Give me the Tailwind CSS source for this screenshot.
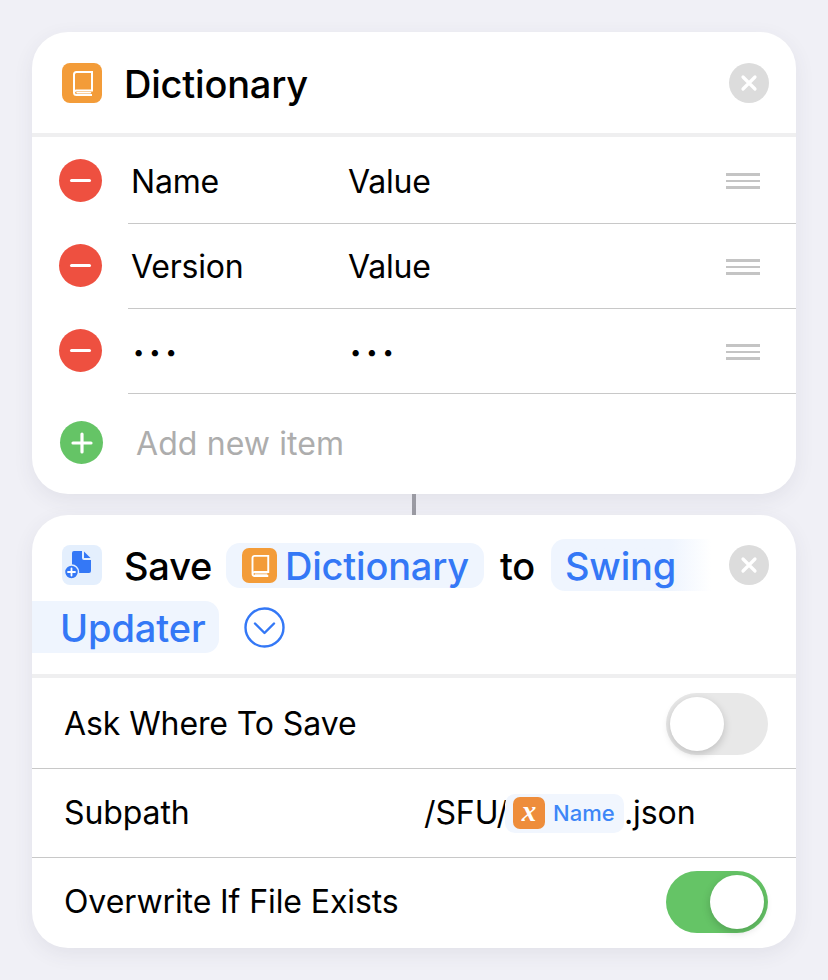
<!DOCTYPE html>
<html lang="en">
<head>
    <meta charset="UTF-8">
    <meta name="viewport" content="width=device-width, initial-scale=1.0">
    <title>Shortcut Actions</title>
    <script src="https://cdn.jsdelivr.net/npm/@tailwindcss/browser@4"></script>
</head>
<body class="bg-[#f0f0f6] w-[828px] h-[980px] overflow-hidden font-['Inter',sans-serif] text-black">

    <div class="pt-[32px] px-[32px] flex flex-col">

        <!-- Dictionary card -->
        <div class="h-[462px] bg-white rounded-[36px] shadow-[0_6px_20px_rgba(60,60,90,0.08)] overflow-hidden flex flex-col">
            <div class="h-[101px] shrink-0 flex items-center pl-[30px] pr-[27px]">
                <div class="w-[40px] h-[40px] rounded-[8px] bg-[#f39c39] shrink-0">
                    <svg width="40" height="40" viewBox="0 0 40 40" fill="none" stroke="#fff"><path d="M12 29.500V11.500A2.500 2.500 0 0 1 14.500 9H30V27.500H14.500A2.500 2.500 0 0 0 12 29.500A2.500 2.500 0 0 0 14.500 32H30" stroke-width="2"/><path d="M15 29.800H28.500" stroke-width="1.500" stroke-linecap="round"/></svg>
                </div>
                <span class="ml-[22px] mt-[2px] text-[38px] leading-none tracking-[-0.2px] font-medium">Dictionary</span>
                <div class="ml-auto w-[40px] h-[40px] rounded-full bg-[#dcdcdc] flex items-center justify-center shrink-0">
                    <svg width="18" height="18" viewBox="0 0 18 18" stroke="#fff" stroke-width="3.200" stroke-linecap="round"><path d="M3 3l12 12M15 3L3 15"/></svg>
                </div>
            </div>
            <div class="h-[4px] shrink-0 bg-[#efeff0]"></div>

            <div class="h-[87px] shrink-0 flex items-center pl-[27px]">
                <div class="w-[43px] h-[43px] rounded-full bg-[#ee5040] flex items-center justify-center shrink-0"><span class="w-[21px] h-[3.500px] bg-white rounded-full"></span></div>
                <div class="ml-[26px] flex-1 self-stretch border-b border-[#c8c8c8] flex items-center pl-[3px] pr-[36px] text-[32px] tracking-[-0.2px]">
                    <span class="w-[217px] mt-[3px]">Name</span><span class="mt-[3px]">Value</span>
                    <div class="ml-auto mt-[2px] flex flex-col gap-[4px]"><span class="block w-[34px] h-[2.500px] bg-[#c4c4c4]"></span><span class="block w-[34px] h-[2.500px] bg-[#c4c4c4]"></span><span class="block w-[34px] h-[2.500px] bg-[#c4c4c4]"></span></div>
                </div>
            </div>
            <div class="h-[85px] shrink-0 flex items-center pl-[27px]">
                <div class="w-[43px] h-[43px] -mt-[2px] rounded-full bg-[#ee5040] flex items-center justify-center shrink-0"><span class="w-[21px] h-[3.500px] bg-white rounded-full"></span></div>
                <div class="ml-[26px] flex-1 self-stretch border-b border-[#c8c8c8] flex items-center pl-[3px] pr-[36px] text-[32px] tracking-[-0.2px]">
                    <span class="w-[217px] mt-[1px]">Version</span><span class="mt-[1px]">Value</span>
                    <div class="ml-auto mt-[2px] flex flex-col gap-[4px]"><span class="block w-[34px] h-[2.500px] bg-[#c4c4c4]"></span><span class="block w-[34px] h-[2.500px] bg-[#c4c4c4]"></span><span class="block w-[34px] h-[2.500px] bg-[#c4c4c4]"></span></div>
                </div>
            </div>
            <div class="h-[85px] shrink-0 flex items-center pl-[27px]">
                <div class="w-[43px] h-[43px] -mt-[2px] rounded-full bg-[#ee5040] flex items-center justify-center shrink-0"><span class="w-[21px] h-[3.500px] bg-white rounded-full"></span></div>
                <div class="ml-[26px] flex-1 self-stretch border-b border-[#c8c8c8] flex items-center pl-[5px] pr-[36px] text-[32px]">
                    <span class="w-[217px] mt-[2px] text-[20px] tracking-[5px] leading-none">•••</span><span class="mt-[2px] text-[20px] tracking-[5px] leading-none">•••</span>
                    <div class="ml-auto mt-[2px] flex flex-col gap-[4px]"><span class="block w-[34px] h-[2.500px] bg-[#c4c4c4]"></span><span class="block w-[34px] h-[2.500px] bg-[#c4c4c4]"></span><span class="block w-[34px] h-[2.500px] bg-[#c4c4c4]"></span></div>
                </div>
            </div>
            <div class="flex-1 flex items-center pl-[28px] pb-[3px]">
                <div class="w-[43px] h-[43px] rounded-full bg-[#65c466] flex items-center justify-center shrink-0">
                    <svg width="22" height="22" viewBox="0 0 22 22" stroke="#fff" stroke-width="3.200" stroke-linecap="round"><path d="M11 2v18M2 11h18"/></svg>
                </div>
                <span class="ml-[33px] mt-[3px] text-[32px] tracking-[0.1px] text-[#adadad]">Add new item</span>
            </div>
        </div>

        <!-- connector -->
        <div class="h-[21px] shrink-0 flex justify-center"><span class="block w-[4px] h-[21px] bg-[#9b9ba3]"></span></div>

        <!-- Save File card -->
        <div class="h-[433px] bg-white rounded-[36px] shadow-[0_6px_20px_rgba(60,60,90,0.08)] overflow-hidden flex flex-col">
            <div class="h-[159px] shrink-0 flex flex-col">
                <div class="h-[52px] mt-[24px] flex items-center pl-[30px] pr-[27px] text-[38px] font-medium tracking-[-0.2px]">
                    <div class="w-[40px] h-[40px] rounded-[8px] bg-[#e4effd] shrink-0">
                        <svg width="40" height="40" viewBox="0 0 40 40"><path d="M12 6h8v7a2 2 0 0 0 2 2h7v11a2 2 0 0 1-2 2H12a2 2 0 0 1-2-2V8a2 2 0 0 1 2-2z" fill="#3478f6"/><path d="M22 6.500L28.500 13H22z" fill="#3478f6"/><circle cx="9.500" cy="27" r="7" fill="#3478f6" stroke="#e4effd" stroke-width="1.500"/><path d="M9.500 23.500v7M6 27h7" stroke="#fff" stroke-width="1.800" stroke-linecap="round"/></svg>
                    </div>
                    <span class="w-[86px] shrink-0 ml-[22px] mt-[2px] leading-none">Save</span>
                    <div class="ml-[16px] h-[45px] w-[258px] rounded-[14px] bg-[#eff5fe] flex items-center pl-[16px] text-[#3478f6] shrink-0">
                        <div class="w-[35px] h-[35px] rounded-[7px] bg-[#f39c39] shrink-0">
                            <svg width="35" height="35" viewBox="0 0 40 40" fill="none" stroke="#fff"><path d="M12 29.500V11.500A2.500 2.500 0 0 1 14.500 9H30V27.500H14.500A2.500 2.500 0 0 0 12 29.500A2.500 2.500 0 0 0 14.500 32H30" stroke-width="2.200"/><path d="M15 29.800H28.500" stroke-width="1.500" stroke-linecap="round"/></svg>
                        </div>
                        <span class="ml-[8px] mt-[2px] leading-none">Dictionary</span>
                    </div>
                    <span class="w-[36px] shrink-0 ml-[16px] mt-[2px] leading-none">to</span>
                    <div class="ml-[15px] h-[52px] w-[160px] rounded-l-[14px] bg-linear-to-r from-[#eff5fe] from-75% to-white flex items-center pl-[14px] text-[#3478f6] shrink-0"><span class="mt-[2px] leading-none">Swing</span></div>
                    <div class="ml-auto w-[40px] h-[40px] rounded-full bg-[#dcdcdc] flex items-center justify-center shrink-0">
                        <svg width="18" height="18" viewBox="0 0 18 18" stroke="#fff" stroke-width="3.200" stroke-linecap="round"><path d="M3 3l12 12M15 3L3 15"/></svg>
                    </div>
                </div>
                <div class="h-[52px] mt-[10px] flex items-center text-[38px] font-medium tracking-[-0.1px]">
                    <div class="w-[187px] h-full rounded-r-[14px] bg-[#eff5fe] flex items-center pl-[28px] text-[#3478f6]"><span class="mt-[2px] leading-none">Updater</span></div>
                    <svg class="ml-[25px]" width="41" height="41" viewBox="0 0 41 41" fill="none" stroke="#3478f6" stroke-width="2.400"><circle cx="20.500" cy="20.500" r="19"/><path d="M11 16.500l9.500 9.500L30 16.500" stroke-linecap="round" stroke-linejoin="round"/></svg>
                </div>
            </div>
            <div class="h-[4px] shrink-0 bg-[#efeff0]"></div>

            <div class="h-[91px] shrink-0 border-b border-[#c8c8c8] flex items-center pt-[2px] pl-[32px] pr-[28px] text-[32px] tracking-[-0.1px]">
                <span>Ask Where To Save</span>
                <div class="ml-auto w-[102px] h-[62px] rounded-full bg-[#e8e8e8] p-[4px] flex justify-start">
                    <span class="block w-[54px] h-[54px] rounded-full bg-white shadow-[0_3px_8px_rgba(0,0,0,0.18)]"></span>
                </div>
            </div>
            <div class="h-[89px] shrink-0 border-b border-[#c8c8c8] flex items-center pl-[32px] text-[32px] tracking-[-0.1px]">
                <span class="w-[360px] shrink-0">Subpath</span>
                <div class="flex items-center">
                    <span class="w-[81px] shrink-0">/SFU/</span>
                    <div class="h-[39px] w-[119px] rounded-[10px] bg-[#f1f6fe] flex items-center pl-[8px] shrink-0">
                        <div class="w-[32px] h-[32px] rounded-[7px] bg-[#ee8d3b] flex items-center justify-center shrink-0"><span class="font-['Liberation_Serif',serif] italic font-bold text-[29px] leading-none text-white -mt-[4px]">x</span></div>
                        <span class="ml-[8px] text-[22px] font-medium leading-none tracking-normal text-[#3d86f7]">Name</span>
                    </div>
                    <span>.json</span>
                </div>
            </div>
            <div class="flex-1 flex items-center pl-[32px] pr-[28px] pb-[2px] text-[32px] tracking-[-0.1px]">
                <span>Overwrite If File Exists</span>
                <div class="ml-auto w-[102px] h-[62px] rounded-full bg-[#65c466] p-[4px] flex justify-end">
                    <span class="block w-[54px] h-[54px] rounded-full bg-white shadow-[0_3px_8px_rgba(0,0,0,0.18)]"></span>
                </div>
            </div>
        </div>
    </div>

</body>
</html>
